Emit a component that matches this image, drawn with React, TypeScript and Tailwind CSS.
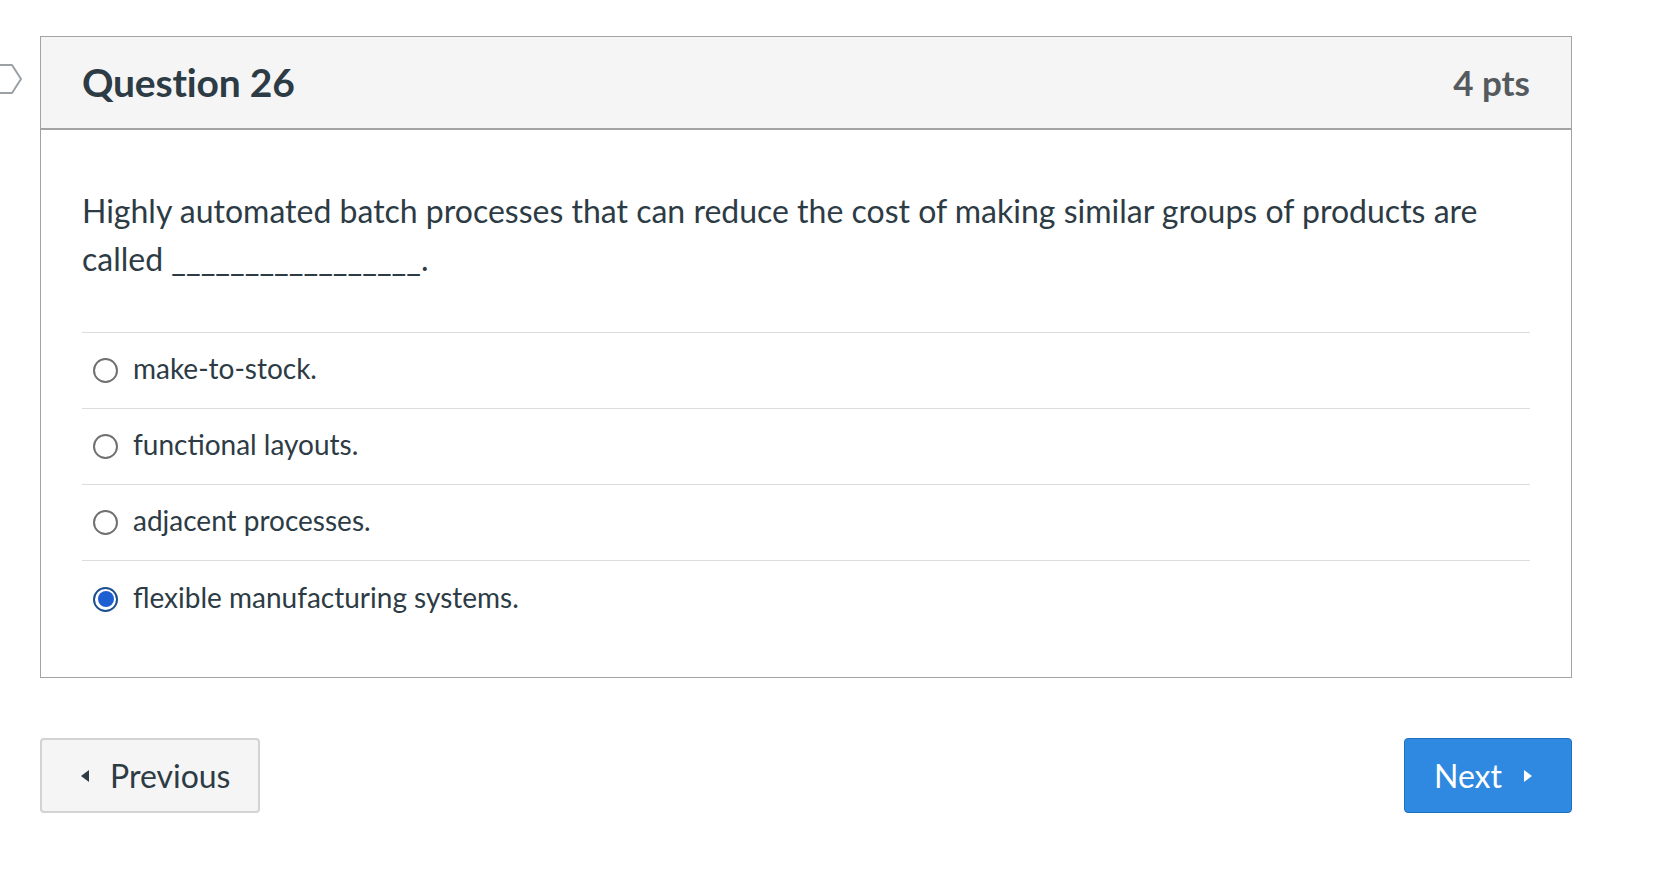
import React from "react";

const options = [
  { label: "make-to-stock.", checked: false },
  { label: "functional layouts.", checked: false },
  { label: "adjacent processes.", checked: false },
  { label: "flexible manufacturing systems.", checked: true },
];

function Radio({ checked }: { checked: boolean }) {
  if (checked) {
    return (
      <span className="flex h-[25px] w-[25px] shrink-0 items-center justify-center rounded-full border-2 border-[#1c4f8c] bg-white">
        <span className="h-[16px] w-[16px] rounded-full bg-[#1d5fd1]" />
      </span>
    );
  }
  return <span className="h-[25px] w-[25px] shrink-0 rounded-full border-2 border-[#707070] bg-white" />;
}

export default function App() {
  return (
    <div className="relative min-h-screen bg-white font-['Lato',sans-serif] text-[#2d3b45]">
      <svg className="absolute left-0 top-[63px]" width="24" height="32" viewBox="0 0 24 32" fill="none">
        <path d="M-4 2 H12 L21 16 L12 30 H-4" stroke="#9aa0a4" strokeWidth="2" strokeLinejoin="round" />
      </svg>

      <div className="pl-[40px] pt-[36px]">
        <div className="w-[1532px] border border-[#a3a3a3]">
          <div className="flex h-[93px] items-center justify-between border-b-2 border-[#a3a3a3] bg-[#f5f5f5] px-[41px]">
            <h1 className="text-[39px] font-bold leading-none tracking-[-0.2px]">Question 26</h1>
            <span className="text-[35px] font-bold text-[#555a5e]">4 pts</span>
          </div>

          <div className="px-[41px] pb-[40px] pt-[57px]">
            <p className="text-[32px] leading-[48px]">
              Highly automated batch processes that can reduce the cost of making similar groups of products are called _________________.
            </p>

            <div className="mt-[49px] border-t border-[#dcdcdc]">
              {options.map((o, i) => (
                <label
                  key={o.label}
                  className={
                    "flex h-[76px] items-center gap-[15px] pl-[11px] " +
                    (i < options.length - 1 ? "border-b border-[#dcdcdc]" : "")
                  }
                >
                  <Radio checked={o.checked} />
                  <span className="mb-[5px] text-[28px] leading-none">{o.label}</span>
                </label>
              ))}
            </div>
          </div>
        </div>

        <div className="mt-[60px] flex w-[1532px] justify-between">
          <button className="flex h-[75px] w-[220px] items-center gap-[21px] rounded-[4px] border-2 border-[#d3d3d3] bg-[#f5f5f5] pl-[39px] text-[32px] text-[#2d3b45]">
            <span className="h-0 w-0 border-y-[6px] border-r-[8px] border-y-transparent border-r-[#2d3b45]" />
            Previous
          </button>
          <button className="flex h-[75px] w-[168px] items-center gap-[22px] rounded-[4px] border border-[#1f70bd] bg-[#3089e0] pl-[29px] text-[32px] text-white">
            Next
            <span className="h-0 w-0 border-y-[6px] border-l-[8px] border-y-transparent border-l-white" />
          </button>
        </div>
      </div>
    </div>
  );
}
